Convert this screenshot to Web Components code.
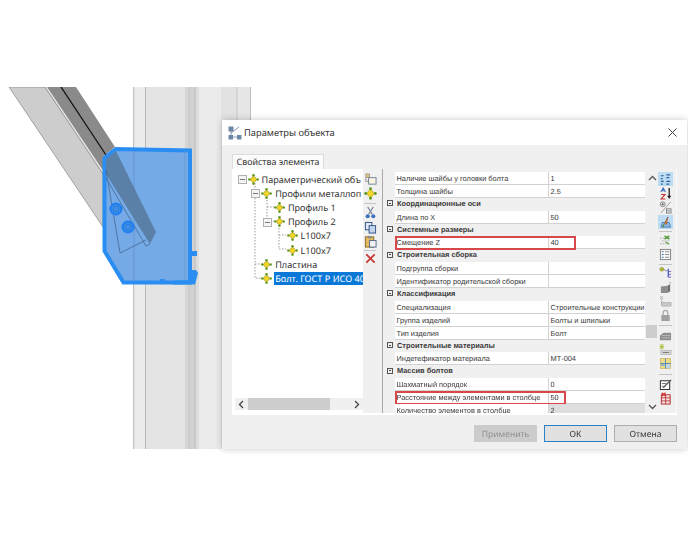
<!DOCTYPE html>
<html lang="ru">
<head>
<meta charset="utf-8">
<title>Параметры объекта</title>
<style>
  html, body { margin: 0; padding: 0; background: #fff; }
  body { font-family: "Noto Sans", "Liberation Sans", sans-serif; text-rendering: geometricPrecision; }
</style>
</head>
<body>
<model-page>
  <model-view></model-view>
  <param-dialog caption="Параметры объекта" tab="Свойства элемента">
    <tree-panel slot="tree">
      <tree-row level="0" box label="Параметрический объ"></tree-row>
      <tree-row level="1" box label="Профили металлоп"></tree-row>
      <tree-row level="2" label="Профиль 1"></tree-row>
      <tree-row level="2" box label="Профиль 2"></tree-row>
      <tree-row level="3" label="L100x7"></tree-row>
      <tree-row level="3" label="L100x7"></tree-row>
      <tree-row level="1" label="Пластина"></tree-row>
      <tree-row level="1" label="Болт. ГОСТ Р ИСО 40" selected></tree-row>
    </tree-panel>
    <tool-strip slot="tree-tools" items="newobj node | cut copy paste | del" seps="5 3"></tool-strip>
    <prop-grid slot="props">
      <prop-row name="Наличие шайбы у головки болта" value="1"></prop-row>
      <prop-row name="Толщина шайбы" value="2.5"></prop-row>
      <prop-row section name="Координационные оси"></prop-row>
      <prop-row name="Длина по X" value="50"></prop-row>
      <prop-row section name="Системные размеры"></prop-row>
      <prop-row name="Смещение Z" value="40" mark="181"></prop-row>
      <prop-row section name="Строительная сборка"></prop-row>
      <prop-row name="Подгруппа сборки"></prop-row>
      <prop-row name="Идентификатор родительской сборки"></prop-row>
      <prop-row section name="Классификация"></prop-row>
      <prop-row name="Специализация" value="Строительные конструкции"></prop-row>
      <prop-row name="Группа изделий" value="Болты и шпильки"></prop-row>
      <prop-row name="Тип изделия" value="Болт"></prop-row>
      <prop-row section name="Строительные материалы"></prop-row>
      <prop-row name="Индетефикатор материала" value="МТ-004"></prop-row>
      <prop-row section name="Массив болтов"></prop-row>
      <prop-row name="Шахматный порядок" value="0"></prop-row>
      <prop-row name="Расстояние между элементами в столбце" value="50" mark="171"></prop-row>
      <prop-row name="Количество элементов в столбце" value="2" readonly></prop-row>
    </prop-grid>
    <tool-strip slot="grid-tools" items="cats* sort plusminus pick* | links list | key gray1 gray2 lock | gray3 star table | pen redgrid" seps="4 4 5 6"></tool-strip>
    <dlg-button slot="buttons" disabled>Применить</dlg-button>
    <dlg-button slot="buttons" primary>ОК</dlg-button>
    <dlg-button slot="buttons">Отмена</dlg-button>
  </param-dialog>
</model-page>

<script>
const nodeIcon = `
  <svg width="11" height="11" viewBox="0 0 11 11">
    <path d="M5.5 1v9M1 5.5h9" stroke="#7c9a2a" stroke-width="1"/>
    <circle cx="5.500" cy="1.400" r="1.300" fill="#5f9a1c"/>
    <circle cx="5.500" cy="9.600" r="1.300" fill="#5f9a1c"/>
    <circle cx="1.400" cy="5.500" r="1.300" fill="#5f9a1c"/>
    <circle cx="9.600" cy="5.500" r="1.300" fill="#5f9a1c"/>
    <circle cx="5.500" cy="5.500" r="2.700" fill="#f2d62a" stroke="#a8962a" stroke-width=".5"/>
  </svg>`;

const toolIcons = {
  newobj: '<rect x="2" y="1" width="4" height="4" fill="#d9c27a" stroke="#8a8a8a" stroke-width=".7"/><rect x="5" y="5" width="8" height="7" fill="#f7f3e0" stroke="#6c7f96"/><path d="M2 5v4h3" fill="none" stroke="#777" stroke-width=".8"/>',
  node: '<path d="M7 1.500v11M1.500 7h11" stroke="#7c9a2a" stroke-width="1.200"/><circle cx="7" cy="1.800" r="1.600" fill="#5f9a1c"/><circle cx="7" cy="12.200" r="1.600" fill="#5f9a1c"/><circle cx="1.800" cy="7" r="1.600" fill="#5f9a1c"/><circle cx="12.200" cy="7" r="1.600" fill="#5f9a1c"/><circle cx="7" cy="7" r="3.400" fill="#f2d62a" stroke="#a8962a" stroke-width=".5"/>',
  cut: '<path d="M4 1l5 8M10 1l-5 8" stroke="#7d8ba0" stroke-width="1.300"/><circle cx="4" cy="11" r="2.200" fill="#3f6fc0"/><circle cx="10" cy="11" r="2.200" fill="#3f6fc0"/>',
  copy: '<rect x="1.500" y="1.500" width="7" height="8" fill="#dfe8f5" stroke="#2f4f86"/><rect x="5.500" y="5" width="7" height="8" fill="#c4d6ee" stroke="#2f4f86"/>',
  paste: '<rect x="1.500" y="2" width="9" height="11" fill="#e3bb62" stroke="#8b6a22"/><rect x="4" y="1" width="4" height="2.600" fill="#8d8d8d"/><rect x="6" y="6" width="7" height="7" fill="#f4f4f4" stroke="#51658a"/>',
  del: '<path d="M2.500 2.500l9 9M11.500 2.500l-9 9" stroke="#c8322e" stroke-width="1.800"/>',
  cats: '<path d="M2 3h3M2 6h2M2 9h3M2 12h2M8 2h4M8 5h3M8 9h4M8 12h3" stroke="#2d5d96" stroke-width="1.200"/>',
  sort: '<path d="M11 1v10" stroke="#222" stroke-width="1.400"/><path d="M8.800 9.500L11 13l2.200-3.500z" fill="#222"/><path d="M2 5.500L4.500 1 7 5.500M3 4h3" fill="none" stroke="#3f6fc0" stroke-width="1.100"/><path d="M2.200 8h4.400l-4.400 5h4.600" fill="none" stroke="#c8322e" stroke-width="1.100"/>',
  plusminus: '<circle cx="4" cy="3.500" r="2.600" fill="none" stroke="#666" stroke-width=".8"/><path d="M2.600 3.500h2.800M4 2.100v2.800" stroke="#444" stroke-width=".7"/><rect x="8" y="8.500" width="5" height="4.500" fill="none" stroke="#666" stroke-width=".8"/><path d="M9 10.700h3" stroke="#444" stroke-width=".7"/><path d="M12.500 1L2 13" stroke="#888" stroke-width=".8"/>',
  pick: '<path d="M2 12h10.500L11 7H3.500z" fill="#8fb8e6" stroke="#3b6ea8" stroke-width=".8"/><path d="M9.500 1L6 8l2 1z" fill="#d6a520" stroke="#a13a2a" stroke-width=".7"/><path d="M4 12l1.500-3" stroke="#4f8d2a" stroke-width="1.300"/>',
  links: '<path d="M1 4.500h12M3 7.500h9M1 10.500h8" stroke="#a9a9a9" stroke-width="1" stroke-dasharray="2 1"/><path d="M6 2l5 3.500M11 2L6 5.500" stroke="#4f9a35" stroke-width="1.400"/><path d="M7 8.500l4 2.500" stroke="#4f9a35" stroke-width="1.200"/>',
  list: '<rect x="1.500" y="1.500" width="11" height="11" fill="#f6f6f6" stroke="#7f7f7f"/><path d="M3 4h2M3 7h2M3 10h2" stroke="#3a6ba5" stroke-width="1"/><path d="M6.500 4h4.500M6.500 7h4.500M6.500 10h4.500" stroke="#8b8b8b" stroke-width="1"/>',
  key: '<circle cx="3" cy="3.500" r="2" fill="#b9c233" stroke="#72791a" stroke-width=".6"/><path d="M5 4l4 1.500" stroke="#888" stroke-width="1"/><path d="M10 3v9" stroke="#4358c5" stroke-width="1.400"/><path d="M10 6h3M10 9h3M10 12h3" stroke="#7c56c2" stroke-width="1"/>',
  gray1: '<path d="M2 6l7-1v8H2z" fill="#8d8d8d"/><path d="M9 5l3-1.500V11l-3 2z" fill="#6f6f6f"/><path d="M10 2l3-1v2z" fill="#b4b4b4"/>',
  gray2: '<path d="M1.500 1.500l2.500 2.500M4 1.500L1.500 4" stroke="#8a8a8a" stroke-width=".8"/><path d="M3 4v7" stroke="#9a9a9a" stroke-width=".8"/><rect x="3" y="8" width="10" height="4" fill="#c9c9c9" stroke="#a3a3a3" stroke-width=".6"/>',
  lock: '<rect x="2.500" y="6.500" width="9" height="6.500" fill="#a1a1a1"/><path d="M4.500 6.500V4a2.500 2.500 0 0 1 5 0v2.500" fill="none" stroke="#a8a8a8" stroke-width="1.300"/>',
  gray3: '<path d="M1 12V7l4-3h8v8z" fill="#8f8f8f"/><path d="M3 7h9M3 9.500h9" stroke="#c2c2c2" stroke-width=".8"/>',
  star: '<path d="M3 1v6M.5 4h5M1 1.500l4 5M5 1.500l-4 5" stroke="#a5b92b" stroke-width=".9"/><rect x="2" y="8" width="11" height="4.500" fill="#d8d8d8" stroke="#a3a3a3" stroke-width=".6"/><path d="M4 10.200h7" stroke="#6a6a6a" stroke-width=".9"/>',
  table: '<rect x="1.500" y="1.500" width="11" height="11" fill="#f0dc82" stroke="#c3b15b" stroke-width=".7"/><path d="M7 1.500v11M1.500 7h11" stroke="#4f86c6"/><rect x="8" y="8" width="4" height="4" fill="#bcd5ee"/><rect x="2" y="8" width="4" height="1.500" fill="#6fa8dc"/>',
  pen: '<path d="M1.500 3h10v9.500h-10z" fill="#fff" stroke="#333" stroke-width="1.100"/><path d="M4 10l8.500-8.500 1 1L5 11z" fill="#555"/><path d="M3 6h5M3 9h2" stroke="#555" stroke-width=".9"/>',
  redgrid: '<rect x="2.500" y="3" width="9.500" height="10" fill="#f7e3e3" stroke="#b02a2a"/><path d="M2.500 6.300h9.500M2.500 9.600h9.500M7.200 3v10" stroke="#b02a2a" stroke-width=".9"/><path d="M3 .8l4 3.500M7 .8L3 4.300" stroke="#d12c2c" stroke-width="1.200"/>',
};

class modelPage extends HTMLElement {
  constructor() {
    super();
    this.attachShadow({ mode: 'open' }).innerHTML = `
      <style>
        :host { display: block; position: relative; width: 688px; height: 537px; overflow: hidden; background: #fff; }
      </style>
      <slot></slot>
    `;
  }
}

class modelView extends HTMLElement {
  constructor() {
    super();
    this.attachShadow({ mode: 'open' }).innerHTML = `
      <style>
        :host { display: block; width: 688px; height: 537px; }
        svg { display: block; filter: blur(.5px); }
      </style>
      <svg width="688" height="537" viewBox="0 0 688 537">
        <defs>
          <clipPath id="view"><rect x="0" y="87" width="688" height="362"/></clipPath>
        </defs>
        <g clip-path="url(#view)">
          <rect x="133" y="87" width="118" height="362" fill="#e6e6e6"/>
          <rect x="133" y="87" width="1.500" height="362" fill="#c4c4c4"/>
          <rect x="134.500" y="87" width="11" height="362" fill="#ececec"/>
          <rect x="145" y="87" width="1.200" height="362" fill="#b9b9b9"/>
          <rect x="146" y="87" width="39" height="362" fill="#e4e4e4"/>
          <rect x="185" y="87" width="3" height="362" fill="#d6d6d6"/>
          <rect x="188" y="87" width="3" height="362" fill="#cdcdcd"/>
          <rect x="191" y="87" width="3" height="362" fill="#d2d2d2"/>
          <rect x="194" y="87" width="2" height="362" fill="#c8c8c8"/>
          <rect x="196" y="87" width="3" height="362" fill="#dcdcdc"/>
          <rect x="199" y="87" width="22" height="362" fill="#ebebeb"/>
          <rect x="221" y="87" width="16" height="362" fill="#e2e2e2"/>
          <rect x="236.500" y="87" width="1" height="362" fill="#c6c6c6"/>
          <rect x="250" y="87" width="1" height="362" fill="#c0c0c0"/>

          <polygon points="9,87 45,87 103,172 103,227" fill="#cdcdcd" stroke="#858585" stroke-width=".7"/>
          <polygon points="45,87 47,87 104,172 102,172" fill="#e6e6e6"/>
          <path d="M45 87L103 174" stroke="#777" stroke-width=".6"/>
          <polygon points="47,87 76,87 115,147 103,157 104,172" fill="#8a8a8a"/>
          <path d="M61 87L106 155" stroke="#111" stroke-width="1.300"/>

          <polygon points="104.500,158 116,149 190,150.500 190,282.500 123.500,282.500 104.500,251" fill="#75aae7" stroke="#2a8df2" stroke-width="4"/>
          <path d="M134 151V281" stroke="#5f8dc4" stroke-width=".7"/>
          <path d="M185 151V281" stroke="#6a9bd6" stroke-width="1"/>
          <polygon points="106,159 116,151 156,232 150,244 106,174" fill="#5a80a8"/>
          <path d="M106 178L146 246 150 244" fill="none" stroke="#3f5f86" stroke-width=".7"/>
          <path d="M106 170L120 253 146 240" fill="none" stroke="#3f5f86" stroke-width=".7"/>
          <circle cx="116" cy="209" r="5.500" fill="#3a8de8" stroke="#1f7ff0" stroke-width="2"/>
          <circle cx="116" cy="209" r="3" fill="none" stroke="#2a74cc" stroke-width=".6"/>
          <circle cx="128" cy="227" r="5.500" fill="#3a8de8" stroke="#1f7ff0" stroke-width="2"/>
          <circle cx="128" cy="227" r="3" fill="none" stroke="#2a74cc" stroke-width=".6"/>
          <path d="M191 251h6v5h-6zM191 270h5l2 3-3 11.500h-22v-3l2-1h16zM160 282v-3h5v3z" fill="#2a8df2"/>
        </g>
      </svg>
    `;
  }
}

class paramDialog extends HTMLElement {
  constructor() {
    super();
    this.shadow = this.attachShadow({ mode: 'open' });
  }

  connectedCallback() {
    this.render();
  }

  render() {
    this.shadow.innerHTML = `
      <style>
        :host {
          display: flex;
          flex-direction: column;
          position: absolute;
          left: 222px;
          top: 120px;
          width: 465px;
          height: 329px;
          background: #f0f0f0;
          box-shadow: 0 0 7px rgba(0, 0, 0, .22);
          color: #222;
          filter: blur(.4px);
        }
        .title {
          display: flex;
          align-items: center;
          height: 25px;
          flex: none;
          background: #fff;
          padding: 0 10px 0 6px;
          gap: 2px;
          font-size: 9.300px;
          color: #333;
        }
        .title span { flex: 1; }
        .body {
          flex: 1;
          display: flex;
          flex-direction: column;
          padding: 9px 10px 0;
        }
        .tab {
          align-self: flex-start;
          box-sizing: border-box;
          width: 92px;
          height: 15px;
          padding-left: 3.500px;
          line-height: 14px;
          font-size: 8.900px;
          color: #333;
          background: #fbfbfb;
          border: 1px solid #dcdcdc;
          border-bottom: 0;
          white-space: nowrap;
        }
        .panel {
          display: flex;
          height: 246px;
          flex: none;
          box-sizing: border-box;
          background: #f0f0f0;
          border-right: 1px solid #fafafa;
          border-bottom: 2px solid #fff;
        }
        .tree-side {
          flex: none;
          width: 145px;
          display: flex;
        }
        .tree-tools {
          flex: none;
          width: 14px;
          padding-top: 3px;
        }
        .divider {
          flex: none;
          width: 1px;
          margin-left: 5px;
          background: #a8a8a8;
          height: 244px;
        }
        .props { flex: none; width: 263px; height: 241px; margin-top: 3px; overflow: hidden; }
        .scroll {
          flex: none;
          position: relative;
          width: 12px;
          height: 241px;
          margin-top: 3px;
          display: flex;
          flex-direction: column;
          align-items: center;
          justify-content: space-between;
          padding: 3px 0;
          box-sizing: border-box;
        }
        .scroll i {
          position: absolute;
          left: 0;
          top: 153px;
          width: 11px;
          height: 13px;
          background: #cdcdcd;
        }
        .grid-tools { flex: none; width: 15px; padding-top: 3px; }
        .footer {
          display: flex;
          justify-content: flex-end;
          gap: 7px;
          padding-top: 10px;
        }
      </style>
      <div class="title">
        <svg width="14" height="14" viewBox="0 0 14 14">
          <path d="M3 3v8h8M3 7l8-6" fill="none" stroke="#8c9db0" stroke-width="1"/>
          <rect x="0.500" y="0.500" width="5" height="5" fill="#6d87a6"/>
          <rect x="0.500" y="9" width="4.500" height="4.500" fill="#6d87a6"/>
          <rect x="9" y="9" width="4.500" height="4.500" fill="#6d87a6"/>
        </svg>
        <span>${this.getAttribute('caption')}</span>
        <svg width="9" height="9" viewBox="0 0 9 9"><path d="M.5.500l8 8M8.500.500l-8 8" stroke="#444" stroke-width="1"/></svg>
      </div>
      <div class="body">
        <div class="tab">${this.getAttribute('tab')}</div>
        <div class="panel">
          <div class="tree-side">
            <slot name="tree"></slot>
            <div class="tree-tools"><slot name="tree-tools"></slot></div>
          </div>
          <div class="divider"></div>
          <div class="props"><slot name="props"></slot></div>
          <div class="scroll">
            <svg width="9" height="6" viewBox="0 0 9 6"><path d="M1 5l3.500-3.500L8 5" fill="none" stroke="#555" stroke-width="1.300"/></svg>
            <i></i>
            <svg width="9" height="6" viewBox="0 0 9 6"><path d="M1 1l3.500 3.500L8 1" fill="none" stroke="#555" stroke-width="1.300"/></svg>
          </div>
          <div class="grid-tools"><slot name="grid-tools"></slot></div>
        </div>
        <div class="footer"><slot name="buttons"></slot></div>
      </div>
    `;
  }
}

class treePanel extends HTMLElement {
  constructor() {
    super();
    this.attachShadow({ mode: 'open' }).innerHTML = `
      <style>
        :host {
          display: flex;
          flex-direction: column;
          flex: none;
          position: relative;
          box-sizing: border-box;
          width: 131px;
          height: 244px;
          background: #fff;
          overflow: hidden;
        }
        .rows { flex: 1; padding-top: 3px; }
        .lines { position: absolute; left: 0; top: 0; }
        .bar {
          flex: none;
          display: flex;
          align-items: center;
          height: 12px;
          margin: 0 0 3px 3px;
          background: #f0f0f0;
        }
        .bar svg { flex: none; margin: 0 3px 0 3px; }
        .bar i { display: block; width: 82px; height: 12px; margin-left: 1px; background: #cdcdcd; }
        .bar b { flex: 1; }
      </style>
      <div class="rows"><slot></slot></div>
      <svg class="lines" width="131" height="130" fill="none" stroke="#9a9a9a" stroke-dasharray="1.500 1.500">
        <path d="M23 14V109H30M23 95H30"/>
        <path d="M35 28V52H42M35 38H42"/>
        <path d="M47 56V80H54M47 66H54"/>
      </svg>
      <div class="bar">
        <svg width="6" height="9" viewBox="0 0 6 9"><path d="M5 1L1.500 4.500 5 8" fill="none" stroke="#444" stroke-width="1.300"/></svg>
        <i></i><b></b>
        <svg width="6" height="9" viewBox="0 0 6 9"><path d="M1 1l3.500 3.500L1 8" fill="none" stroke="#444" stroke-width="1.300"/></svg>
      </div>
    `;
  }
}

class treeRow extends HTMLElement {
  constructor() {
    super();
    this.shadow = this.attachShadow({ mode: 'open' });
  }

  connectedCallback() {
    const level = Number(this.getAttribute('level'));
    const selected = this.hasAttribute('selected');
    this.shadow.innerHTML = `
      <style>
        :host {
          display: flex;
          align-items: center;
          position: relative;
          z-index: 1;
          height: 14.200px;
          padding-left: ${15.500 + level * 12.700 + (level ? 1 : 0)}px;
          font-size: 9.100px;
          color: #333;
          white-space: nowrap;
        }
        .box {
          position: absolute;
          left: ${6 + level * 12.600}px;
          top: 3px;
          width: 7px;
          height: 7px;
          border: 1px solid #b0b0b0;
          background: #f4f4f4;
        }
        .box::after {
          content: "";
          position: absolute;
          left: 1px;
          top: 3px;
          width: 5px;
          height: 1px;
          background: #777;
        }
        svg { flex: none; margin-right: ${selected ? 1.500 : 3}px; }
        .label { line-height: 13px; }
        .on {
          flex: 1;
          padding-left: 1.500px;
          background: #0a78d7;
          color: #fff;
        }
      </style>
      ${this.hasAttribute('box') ? '<span class="box"></span>' : ''}
      ${nodeIcon}
      <span class="label ${selected ? 'on' : ''}">${this.getAttribute('label')}</span>
    `;
  }
}

class toolStrip extends HTMLElement {
  constructor() {
    super();
    this.shadow = this.attachShadow({ mode: 'open' });
  }

  connectedCallback() {
    const seps = this.getAttribute('seps').split(' ');
    let html = '';
    this.getAttribute('items').split(' ').forEach((item) => {
      if (item === '|') {
        html += `<div class="sep" style="height:${seps.shift()}px"></div>`;
        return;
      }
      const active = item.endsWith('*');
      const name = item.replace('*', '');
      html += `<div class="item ${active ? 'active' : ''}"><svg width="14" height="14" viewBox="0 0 14 14">${toolIcons[name]}</svg></div>`;
    });
    this.shadow.innerHTML = `
      <style>
        :host { display: flex; flex-direction: column; align-items: stretch; }
        .item { display: flex; align-items: center; justify-content: center; height: 14.300px; }
        .item svg { width: 13px; height: 13px; }
        .active { background: #bcdcf4; }
        .sep { position: relative; }
        .sep::after {
          content: "";
          position: absolute;
          left: 1px;
          right: 1px;
          top: 50%;
          height: 1px;
          background: #c4c4c4;
        }
      </style>
      ${html}
    `;
  }
}

class propGrid extends HTMLElement {
  constructor() {
    super();
    this.attachShadow({ mode: 'open' }).innerHTML = `
      <style>
        :host { display: block; font-family: "Liberation Sans", sans-serif; font-size: 7.400px; color: #3a3a3a; }
      </style>
      <slot></slot>
    `;
  }
}

class propRow extends HTMLElement {
  constructor() {
    super();
    this.shadow = this.attachShadow({ mode: 'open' });
  }

  connectedCallback() {
    const name = this.getAttribute('name');
    const value = this.getAttribute('value') || '';
    const mark = this.getAttribute('mark');
    if (this.hasAttribute('section')) {
      this.shadow.innerHTML = `
        <style>
          :host {
            display: flex;
            align-items: center;
            box-sizing: border-box;
            height: 12.900px;
            padding: 0 0 2px 4px;
            gap: 4px;
            background: #f0f0f0;
            font-weight: 700;
            white-space: nowrap;
          }
          .box {
            flex: none;
            position: relative;
            box-sizing: border-box;
            width: 6px;
            height: 6px;
            border: 1px solid #555;
          }
          .box::after {
            content: "";
            position: absolute;
            left: 1px;
            top: 1.500px;
            width: 2px;
            height: 1px;
            background: #444;
          }
        </style>
        <span class="box"></span><span>${name}</span>
      `;
      return;
    }
    this.shadow.innerHTML = `
      <style>
        :host {
          display: grid;
          grid-template-columns: 154px 96px;
          position: relative;
          box-sizing: border-box;
          height: 12.900px;
          padding-left: 12px;
          background: linear-gradient(#f0f0f0, #f0f0f0) left / 12px 100% no-repeat;
          line-height: 13px;
          white-space: nowrap;
        }
        div {
          background: #fff;
          box-sizing: border-box;
          height: 12.900px;
          padding-left: 1.500px;
          border-bottom: 1px solid #d2d2d2;
          overflow: hidden;
        }
        .name { border-right: 1px solid #d2d2d2; }
        .readonly { background: #dedede; }
        .mark {
          position: absolute;
          left: 12px;
          top: 0;
          box-sizing: border-box;
          width: ${mark}px;
          height: 14px;
          padding: 0;
          background: none;
          border: 2px solid #d8474a;
        }
      </style>
      <div class="name">${name}</div>
      <div class="${this.hasAttribute('readonly') ? 'readonly' : ''}">${value}</div>
      ${mark ? '<div class="mark"></div>' : ''}
    `;
  }
}

class dlgButton extends HTMLElement {
  constructor() {
    super();
    this.attachShadow({ mode: 'open' }).innerHTML = `
      <style>
        :host {
          display: flex;
          align-items: center;
          justify-content: center;
          box-sizing: border-box;
          width: 63px;
          height: 17px;
          background: #e1e1e1;
          border: 1px solid #adadad;
          font-size: 8.600px;
          color: #333;
        }
        :host([primary]) { border: 1.500px solid #2a80c4; }
        :host([disabled]) { background: #cccccc; border-color: #cccccc; color: #8f8f8f; }
      </style>
      <slot></slot>
    `;
  }
}

customElements.define('model-page', modelPage);
customElements.define('model-view', modelView);
customElements.define('param-dialog', paramDialog);
customElements.define('tree-panel', treePanel);
customElements.define('tree-row', treeRow);
customElements.define('tool-strip', toolStrip);
customElements.define('prop-grid', propGrid);
customElements.define('prop-row', propRow);
customElements.define('dlg-button', dlgButton);
</script>
</body>
</html>
